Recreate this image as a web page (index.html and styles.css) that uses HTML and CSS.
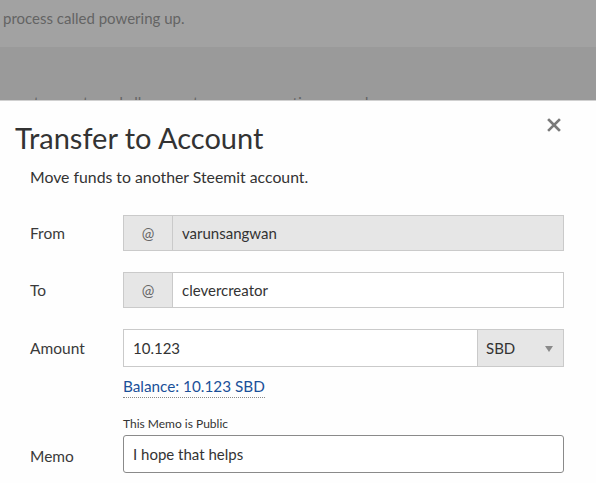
FILE: index.html
```html
<!DOCTYPE html>
<html>
<head>
<meta charset="utf-8">
<link rel="stylesheet" href="styles.css">
</head>
<body>
<div class="page">
  <div class="band band-top">
    <p class="bg-line">process called powering up.</p>
  </div>
  <div class="band band-bottom">
    <p class="bg-line bg-line-last">expect payouts and allow you to earn on curation rewards.</p>
  </div>
</div>

<div class="modal">
  <button class="close" aria-label="Close">
    <svg width="14" height="14" viewBox="0 0 14 14"><path d="M2 2 L12 12 M12 2 L2 12" stroke="#7a7a7a" stroke-width="2.6" stroke-linecap="square"/></svg>
  </button>
  <h1 class="title">Transfer to Account</h1>
  <p class="subtitle">Move funds to another Steemit account.</p>

  <div class="row row-from">
    <label class="label">From</label>
    <div class="group disabled">
      <span class="addon">@</span>
      <span class="field">varunsangwan</span>
    </div>
  </div>

  <div class="row row-to">
    <label class="label">To</label>
    <div class="group">
      <span class="addon">@</span>
      <span class="field">clevercreator</span>
    </div>
  </div>

  <div class="row row-amount">
    <label class="label">Amount</label>
    <div class="group tall">
      <span class="field">10.123</span>
      <span class="select">SBD<span class="caret"></span></span>
    </div>
  </div>
  <div class="row row-balance">
    <span></span>
    <div><a class="balance">Balance: 10.123 SBD</a></div>
  </div>

  <div class="row row-note">
    <span></span>
    <div class="note">This Memo is Public</div>
  </div>
  <div class="row row-memo">
    <label class="label">Memo</label>
    <div class="group tall memo">
      <span class="field">I hope that helps</span>
    </div>
  </div>
</div>
</body>
</html>
```

FILE: styles.css
```css
* { box-sizing: border-box; }
html, body { margin: 0; padding: 0; }
body {
  width: 596px;
  height: 483px;
  overflow: hidden;
  position: relative;
  font-family: "Lato", "Liberation Sans", sans-serif;
  color: #333;
}
.page { height: 483px; }
.band-top { background: #a2a2a2; height: 47px; padding: 7px 0 0 3px; }
.band-bottom { background: #9a9a9a; height: 436px; padding-top: 44px; overflow: hidden; }
.bg-line { margin: 0; font-size: 15px; color: #646464; line-height: 22px; white-space: nowrap; }
.bg-line-last { margin-left: -5px; }

.modal {
  position: absolute;
  top: 100px; left: 0; right: 0; bottom: 0;
  background: #fefefe;
  border-top: 1px solid #d0d0d0;
}
.close {
  position: absolute;
  top: 17px; right: 35px;
  border: 0; background: none; padding: 0;
  width: 14px; height: 14px;
  display: block;
}
.close svg { display: block; }
.title {
  margin: 0;
  padding: 19px 0 0 15px;
  font-size: 29px;
  font-weight: 400;
  line-height: 36px;
  color: #333;
}
.subtitle {
  margin: 0;
  padding: 11px 0 0 30px;
  font-size: 15.8px;
  line-height: 20px;
  color: #333;
}
.row {
  display: grid;
  grid-template-columns: 123px 441px;
  align-items: center;
}
.label {
  padding-left: 30px;
  font-size: 15.5px;
  color: #3a3a3a;
}
.row-from { margin-top: 28px; }
.row-to { margin-top: 21px; }
.row-amount { margin-top: 21px; }
.row-balance { margin-top: 9px; }
.row-note { margin-top: 18px; }
.row-memo { margin-top: 3px; }
.row-memo .label { padding-top: 4px; }

.group {
  display: flex;
  height: 36px;
  border: 1px solid #cacaca;
  background: #fff;
}
.group.tall { height: 38px; }
.group.disabled { background: #e6e6e6; }
.addon {
  width: 49px;
  flex: none;
  background: #e6e6e6;
  border-right: 1px solid #cacaca;
  display: flex;
  align-items: center;
  justify-content: center;
  font-size: 15px;
  color: #666;
}
.field {
  flex: 1;
  display: flex;
  align-items: center;
  padding-left: 9px;
  font-size: 15px;
  color: #333;
}
.select {
  width: 86px;
  flex: none;
  background: #e6e6e6;
  border-left: 1px solid #cacaca;
  display: flex;
  align-items: center;
  padding-left: 8px;
  font-size: 15px;
  color: #333;
  position: relative;
}
.caret {
  position: absolute;
  right: 10px; top: 16px;
  width: 0; height: 0;
  border-left: 4px solid transparent;
  border-right: 4px solid transparent;
  border-top: 6px solid #8a8a8a;
}
.balance {
  display: inline-block;
  font-size: 15.3px;
  line-height: 20px;
  color: #1a5099;
  border-bottom: 1px dotted #888;
  padding-bottom: 1px;
}
.note { font-size: 12px; color: #333; line-height: 16px; }
.memo { border-color: #8a8a8a; border-radius: 3px; }
```
